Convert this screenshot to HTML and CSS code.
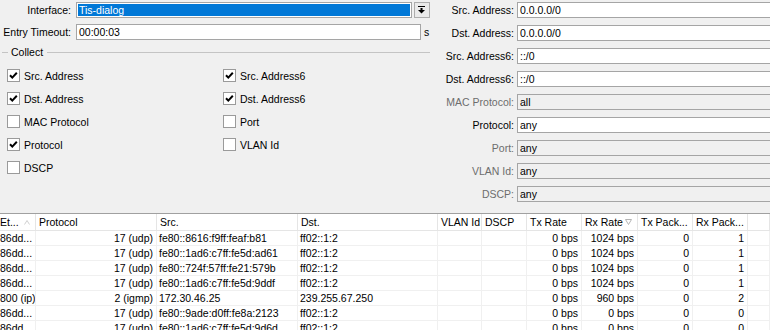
FILE: index.html
```html
<!DOCTYPE html>
<html lang="en">
<head>
  <meta charset="UTF-8" />
  <title>Torch</title>
  <link rel="stylesheet" href="styles.css">
</head>
<body>

  <div class="filters">
    <div class="left">
      <div class="field">
        <label>Interface:</label>
        <div class="input iface"><span class="selected">Tis-dialog</span></div>
        <button class="drop" title="Select">
          <svg width="8" height="8" viewBox="0 0 8 8"><rect x="0" y="0" width="7" height="1" fill="#000"/><rect x="2.5" y="2" width="2" height="2" fill="#000"/><path d="M0 4h7L3.5 7.5z" fill="#000"/></svg>
        </button>
      </div>
      <div class="field">
        <label>Entry Timeout:</label>
        <div class="input timeout">00:00:03</div>
        <span class="unit">s</span>
      </div>

      <div class="group-title">
        <span class="line short"></span>
        <span class="title">Collect</span>
        <span class="line"></span>
      </div>

      <div class="collect">
        <div class="check"><span class="box on"></span>Src. Address</div>
        <div class="check"><span class="box on"></span>Src. Address6</div>
        <div class="check"><span class="box on"></span>Dst. Address</div>
        <div class="check"><span class="box on"></span>Dst. Address6</div>
        <div class="check"><span class="box"></span>MAC Protocol</div>
        <div class="check"><span class="box"></span>Port</div>
        <div class="check"><span class="box on"></span>Protocol</div>
        <div class="check"><span class="box"></span>VLAN Id</div>
        <div class="check"><span class="box"></span>DSCP</div>
      </div>
    </div>

    <div class="right">
      <div class="field"><label>Src. Address:</label><div class="input">0.0.0.0/0</div></div>
      <div class="field"><label>Dst. Address:</label><div class="input">0.0.0.0/0</div></div>
      <div class="field"><label>Src. Address6:</label><div class="input">::/0</div></div>
      <div class="field"><label>Dst. Address6:</label><div class="input">::/0</div></div>
      <div class="field off"><label>MAC Protocol:</label><div class="input">all</div></div>
      <div class="field"><label>Protocol:</label><div class="input">any</div></div>
      <div class="field off"><label>Port:</label><div class="input">any</div></div>
      <div class="field off"><label>VLAN Id:</label><div class="input">any</div></div>
      <div class="field off"><label>DSCP:</label><div class="input">any</div></div>
    </div>
  </div>

  <table class="grid">
    <colgroup>
      <col style="width:36px"><col style="width:121px"><col style="width:141px"><col style="width:140px">
      <col style="width:44px"><col style="width:45px"><col style="width:55px"><col style="width:56px">
      <col style="width:55px"><col style="width:55px"><col>
    </colgroup>
    <thead>
      <tr>
        <th class="first"><div class="hd">Et...<svg class="sort" width="6" height="5" viewBox="0 0 6 5"><path d="M0.5 4.5L3 0.5L5.5 4.5" fill="none" stroke="#d0d0d0"/></svg></div></th>
        <th>Protocol</th>
        <th>Src.</th>
        <th>Dst.</th>
        <th>VLAN Id</th>
        <th>DSCP</th>
        <th>Tx Rate</th>
        <th><div class="hd">Rx Rate<svg class="sort" width="7" height="6" viewBox="0 0 7 6"><path d="M0.5 0.5h6L3.5 5.5z" fill="none" stroke="#b4b4b4"/></svg></div></th>
        <th>Tx Pack...</th>
        <th>Rx Pack...</th>
        <th></th>
      </tr>
    </thead>
    <tbody>
      <tr><td class="first">86dd...</td><td class="num">17 (udp)</td><td>fe80::8616:f9ff:feaf:b81</td><td>ff02::1:2</td><td></td><td></td><td class="num">0 bps</td><td class="num">1024 bps</td><td class="num">0</td><td class="num">1</td><td></td></tr>
      <tr><td class="first">86dd...</td><td class="num">17 (udp)</td><td>fe80::1ad6:c7ff:fe5d:ad61</td><td>ff02::1:2</td><td></td><td></td><td class="num">0 bps</td><td class="num">1024 bps</td><td class="num">0</td><td class="num">1</td><td></td></tr>
      <tr><td class="first">86dd...</td><td class="num">17 (udp)</td><td>fe80::724f:57ff:fe21:579b</td><td>ff02::1:2</td><td></td><td></td><td class="num">0 bps</td><td class="num">1024 bps</td><td class="num">0</td><td class="num">1</td><td></td></tr>
      <tr><td class="first">86dd...</td><td class="num">17 (udp)</td><td>fe80::1ad6:c7ff:fe5d:9ddf</td><td>ff02::1:2</td><td></td><td></td><td class="num">0 bps</td><td class="num">1024 bps</td><td class="num">0</td><td class="num">1</td><td></td></tr>
      <tr><td class="first">800 (ip)</td><td class="num">2 (igmp)</td><td>172.30.46.25</td><td>239.255.67.250</td><td></td><td></td><td class="num">0 bps</td><td class="num">960 bps</td><td class="num">0</td><td class="num">2</td><td></td></tr>
      <tr><td class="first">86dd...</td><td class="num">17 (udp)</td><td>fe80::9ade:d0ff:fe8a:2123</td><td>ff02::1:2</td><td></td><td></td><td class="num">0 bps</td><td class="num">0 bps</td><td class="num">0</td><td class="num">0</td><td></td></tr>
      <tr><td class="first">86dd...</td><td class="num">17 (udp)</td><td>fe80::1ad6:c7ff:fe5d:9d6d</td><td>ff02::1:2</td><td></td><td></td><td class="num">0 bps</td><td class="num">0 bps</td><td class="num">0</td><td class="num">0</td><td></td></tr>
    </tbody>
  </table>

</body>
</html>
```

FILE: styles.css
```css
body {
  margin: 0;
  width: 770px;
  height: 330px;
  overflow: hidden;
  background-color: #f0f0f0;
  color: #000;
  font-family: "Liberation Sans", Arial, sans-serif;
  font-size: 10.5px;
}

.filters {
  display: flex;
  height: 213px;
}

.left {
  width: 440px;
  flex-shrink: 0;
  padding-top: 2px;
  box-sizing: border-box;
}

.right {
  flex: 1;
  padding-top: 2px;
  overflow: hidden;
}

.field {
  display: flex;
  align-items: center;
  height: 16px;
  margin-bottom: 7px;
}

.left .field {
  margin-bottom: 6px;
}

.field label {
  width: 76px;
  flex-shrink: 0;
  box-sizing: border-box;
  padding-right: 5px;
  text-align: right;
  white-space: nowrap;
}

.right .field label {
  width: 77px;
  padding-right: 3px;
}

.input {
  height: 16px;
  box-sizing: border-box;
  border: 1px solid #a5a5a5;
  background-color: #fff;
  padding: 0 2px;
  line-height: 14px;
  white-space: nowrap;
  overflow: hidden;
}

.right .input {
  width: 290px;
  flex-shrink: 0;
}

.field.off label {
  color: #6d6d6d;
}

.field.off .input {
  background-color: #f0f0f0;
}

.input.iface {
  width: 336px;
  padding: 1px;
}

.selected {
  display: block;
  height: 12px;
  line-height: 12px;
  padding: 0 1px;
  background-color: #0078d7;
  color: #fff;
}

.drop {
  width: 16px;
  height: 16px;
  margin-left: 2px;
  padding: 0;
  border: 1px solid #adadad;
  background-color: #eaeaea;
  display: flex;
  align-items: center;
  justify-content: center;
}

.input.timeout {
  width: 345px;
}

.unit {
  margin-left: 3px;
}

.group-title {
  display: flex;
  align-items: center;
  height: 12px;
  margin: 0 10px 0 2px;
}

.group-title .line {
  flex: 1;
  height: 1px;
  background-color: #c4c4c4;
}

.group-title .line.short {
  flex: 0 0 6px;
}

.group-title .title {
  padding: 0 4px 0 3px;
}

.collect {
  display: grid;
  grid-template-columns: 216px 1fr;
  grid-auto-rows: 23px;
  padding-left: 7px;
  margin-top: 6px;
}

.check {
  display: flex;
  align-items: center;
  gap: 4px;
}

.box {
  width: 13px;
  height: 13px;
  box-sizing: border-box;
  border: 1px solid #9a9a9a;
  background-color: #fff;
  flex-shrink: 0;
}

.box.on {
  background-image: url("data:image/svg+xml,%3Csvg xmlns='http://www.w3.org/2000/svg' width='11' height='11'%3E%3Cpath d='M2 5.2l2.3 2.4L8.8 2.8' fill='none' stroke='%23000' stroke-width='2'/%3E%3C/svg%3E");
  background-repeat: no-repeat;
}

.grid {
  width: 770px;
  table-layout: fixed;
  border-collapse: separate;
  border-spacing: 0;
  border-top: 1px solid #a0a0a0;
  background-color: #fff;
}

.grid th {
  font-weight: normal;
  text-align: left;
  line-height: 16px;
  padding: 0 0 0 3px;
  border-right: 1px solid #e5e5e5;
  border-bottom: 1px solid #e5e5e5;
  white-space: nowrap;
  overflow: hidden;
}

.grid td {
  line-height: 14px;
  padding: 0 0 0 2px;
  border-right: 1px solid #f0f0f0;
  border-bottom: 1px solid #f0f0f0;
  white-space: nowrap;
  overflow: hidden;
}

.grid td.num {
  text-align: right;
  padding: 0 3px 0 0;
}

.grid .first {
  padding-left: 0;
}

.hd {
  display: flex;
  align-items: center;
  justify-content: space-between;
  padding-right: 5px;
}

.sort {
  flex-shrink: 0;
}
```
